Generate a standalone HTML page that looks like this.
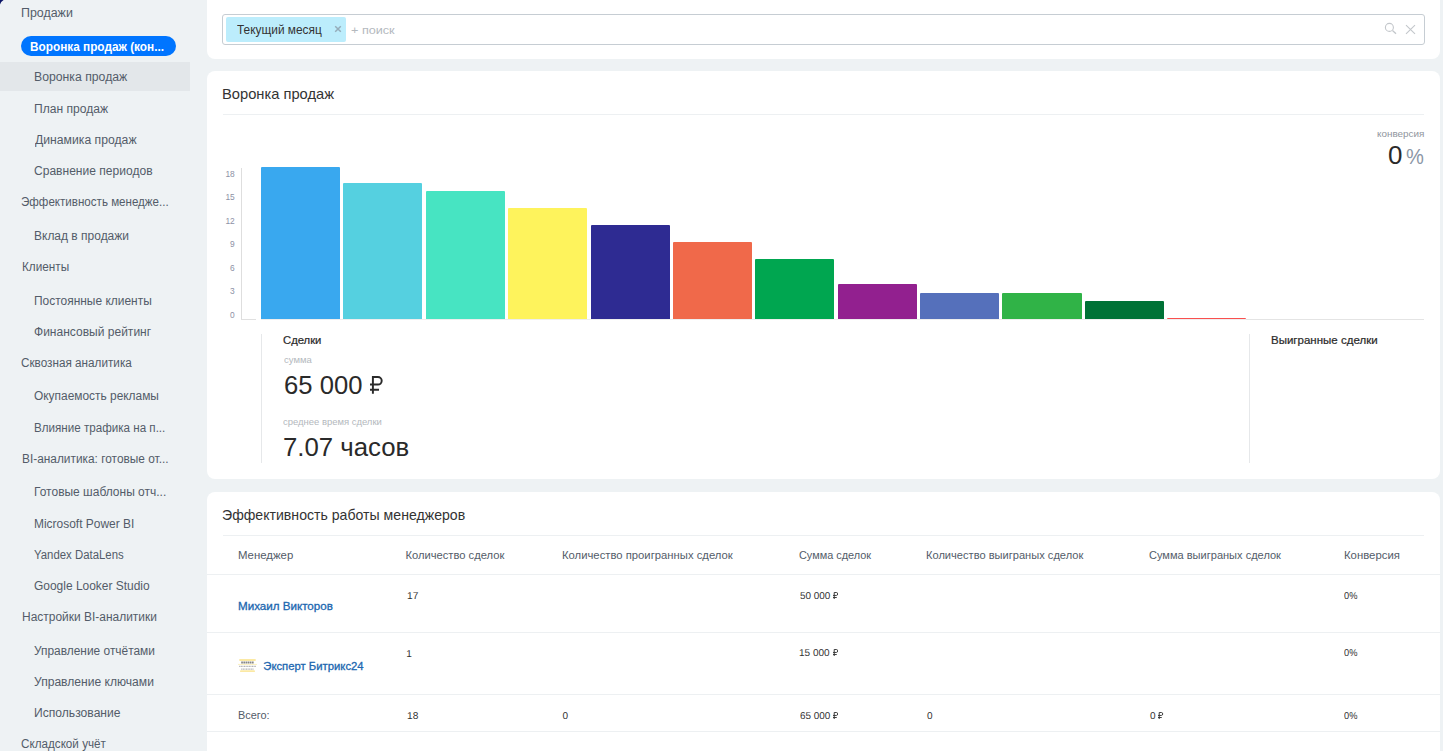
<!DOCTYPE html>
<html lang="ru">
<head>
<meta charset="utf-8">
<title>Воронка продаж</title>
<style>
*{box-sizing:border-box;margin:0;padding:0}
html,body{width:1443px;height:751px;overflow:hidden}
body{background:#eef2f4;font-family:"Liberation Sans",sans-serif;color:#535c69;position:relative}
.abs{position:absolute}
.t{position:absolute;white-space:nowrap;line-height:1;transform-origin:0 0}
.hl{position:absolute;left:0;top:62px;width:190px;height:29px;background:#e3e7ea}
.pill{position:absolute;left:21px;top:36px;width:155px;height:20px;border-radius:10px;background:#0075ff}
.panel{position:absolute;left:207px;width:1233px;background:#fff;border-radius:8px}
.ln{position:absolute;background:#edf0f2}
.bar{position:absolute;width:79.1px;border-radius:1px 1px 0 0}
.inp{position:absolute;left:222px;top:14px;width:1203px;height:31px;border:1px solid #c6cdd3;border-radius:3px;background:#fff}
.tag{position:absolute;left:226px;top:17px;width:120px;height:25px;border-radius:2px;background:#bcedfc}
</style>
</head>
<body>
<svg class="abs" style="left:0;top:0" width="4" height="5" viewBox="0 0 4 5"><path d="M0 0H3.6Q0.6 1.6 0 4.6Z" fill="#0b1566"/></svg>
<div class="hl"></div>
<div class="pill"></div>

<div class="panel" style="top:-12px;height:71px"></div>
<div class="inp"></div>
<div class="tag"></div>
<svg class="abs" style="left:334px;top:25px" width="8" height="8" viewBox="0 0 8 8"><path d="M1.2 1.2L6.8 6.8M6.8 1.2L1.2 6.8" stroke="#95adba" stroke-width="1.5" fill="none"/></svg>
<svg class="abs" style="left:1383px;top:21px" width="16" height="16" viewBox="0 0 16 16"><circle cx="6.4" cy="6.4" r="4.0" fill="none" stroke="#c3c7cb" stroke-width="1.1"/><path d="M9.5 9.5L13 12.8" stroke="#c3c7cb" stroke-width="1.3" fill="none"/></svg>
<svg class="abs" style="left:1405px;top:24px" width="11" height="11" viewBox="0 0 11 11"><path d="M1 1.1L10 9.8M10 1.1L1 9.8" stroke="#c3c7cb" stroke-width="1.1" fill="none"/></svg>

<div class="panel" style="top:71px;height:407.5px"></div>
<div class="ln" style="left:223px;top:114px;width:1201px;height:1px"></div>
<div class="ln" style="left:241px;top:168px;width:1px;height:151px;background:#dedede"></div>
<div class="ln" style="left:241px;top:319px;width:15px;height:1px;background:#e0e0e0"></div>
<div class="ln" style="left:261px;top:319px;width:985px;height:1px;background:#eeeeee"></div>
<div class="ln" style="left:1246px;top:319px;width:178px;height:1px;background:#e4e4e4"></div>
<div class="bar" style="left:261.00px;top:167px;height:152px;background:#39a8ef"></div>
<div class="bar" style="left:343.38px;top:183px;height:136px;background:#55d0e0"></div>
<div class="bar" style="left:425.76px;top:191px;height:128px;background:#47e4c2"></div>
<div class="bar" style="left:508.14px;top:208px;height:111px;background:#fef35c"></div>
<div class="bar" style="left:590.52px;top:225px;height:94px;background:#2e2b92"></div>
<div class="bar" style="left:672.90px;top:242px;height:77px;background:#f0694a"></div>
<div class="bar" style="left:755.28px;top:259px;height:60px;background:#00a650"></div>
<div class="bar" style="left:837.66px;top:284px;height:35px;background:#92208f"></div>
<div class="bar" style="left:920.04px;top:293px;height:26px;background:#5570bb"></div>
<div class="bar" style="left:1002.42px;top:293px;height:26px;background:#30b347"></div>
<div class="bar" style="left:1084.80px;top:301px;height:18px;background:#007236"></div>
<div class="bar" style="left:1167.18px;top:317.6px;height:1.4px;background:#f9504f"></div>

<div class="ln" style="left:261px;top:334px;width:1px;height:129px;background:#e6e8ea"></div>
<div class="ln" style="left:1249px;top:334px;width:1px;height:129px;background:#e6e8ea"></div>

<div class="panel" style="top:492px;height:280px"></div>
<div class="ln" style="left:223px;top:535px;width:1201px;height:1px"></div>
<div class="ln" style="left:207px;top:574px;width:1233px;height:1px"></div>
<div class="ln" style="left:207px;top:632px;width:1233px;height:1px"></div>
<div class="ln" style="left:207px;top:694px;width:1233px;height:1px"></div>
<div class="ln" style="left:207px;top:731px;width:1233px;height:1px"></div>

<svg class="abs" style="left:238px;top:658px" width="19" height="15" viewBox="0 0 19 15">
<rect x="1.1" y="1.1" width="16.8" height="1.9" rx="0.9" fill="#fbe9a4"/>
<rect x="0" y="5.9" width="19" height="1.1" fill="#fdf2c4"/>
<rect x="2" y="12.3" width="15" height="1.8" rx="0.9" fill="#fbe9a4"/>
<path d="M3.2 4.5H16" stroke="#3c3c3c" stroke-width="2.2" stroke-dasharray="1.7 0.45" opacity="0.62" fill="none"/>
<path d="M1.2 8.4H18" stroke="#666" stroke-width="1.4" stroke-dasharray="1.1 0.5" opacity="0.5" fill="none"/>
<path d="M3.2 11.1H16" stroke="#666" stroke-width="1.4" stroke-dasharray="1.1 0.5" opacity="0.5" fill="none"/>
</svg>
<svg class="abs" style="left:370.10px;top:376.20px" width="12.70" height="17.70" viewBox="0 0 71.8 100"><path d="M16.4 100V5.5H44.7A21.5 21.5 0 0 1 44.7 48.6H0M0 78H50.9" fill="none" stroke="#2a2a2a" stroke-width="11.0"/></svg><svg class="abs" style="left:832.50px;top:591.80px" width="5.32" height="7.10" viewBox="0 0 75.0 100"><path d="M17.1 100V6.7H47.4A21.0 21.0 0 0 1 47.4 48.6H0M0 78H53.2" fill="none" stroke="#333" stroke-width="13.4"/></svg><svg class="abs" style="left:832.50px;top:649.30px" width="5.32" height="7.10" viewBox="0 0 75.0 100"><path d="M17.1 100V6.7H47.4A21.0 21.0 0 0 1 47.4 48.6H0M0 78H53.2" fill="none" stroke="#333" stroke-width="13.4"/></svg><svg class="abs" style="left:832.50px;top:711.90px" width="5.32" height="7.10" viewBox="0 0 75.0 100"><path d="M17.1 100V6.7H47.4A21.0 21.0 0 0 1 47.4 48.6H0M0 78H53.2" fill="none" stroke="#333" stroke-width="13.4"/></svg><svg class="abs" style="left:1158.30px;top:711.90px" width="5.32" height="7.10" viewBox="0 0 75.0 100"><path d="M17.1 100V6.7H47.4A21.0 21.0 0 0 1 47.4 48.6H0M0 78H53.2" fill="none" stroke="#333" stroke-width="13.4"/></svg>
<span class="t" style="top:7.01px;font-size:12.5px;color:#535c69;left:21.02px;transform:scaleX(0.9929);">Продажи</span>
<span class="t" style="top:71.01px;font-size:12.5px;color:#535c69;left:34.24px;transform:scaleX(0.9791);">Воронка продаж</span>
<span class="t" style="top:103.01px;font-size:12.5px;color:#535c69;left:33.64px;transform:scaleX(0.9661);">План продаж</span>
<span class="t" style="top:134.01px;font-size:12.5px;color:#535c69;left:34.65px;transform:scaleX(0.9759);">Динамика продаж</span>
<span class="t" style="top:165.01px;font-size:12.5px;color:#535c69;left:34.47px;transform:scaleX(0.9640);">Сравнение периодов</span>
<span class="t" style="top:196.01px;font-size:12.5px;color:#535c69;left:20.77px;transform:scaleX(0.9265);">Эффективность менедже...</span>
<span class="t" style="top:230.01px;font-size:12.5px;color:#535c69;left:33.64px;transform:scaleX(0.9591);">Вклад в продажи</span>
<span class="t" style="top:261.01px;font-size:12.5px;color:#535c69;left:21.57px;transform:scaleX(0.9414);">Клиенты</span>
<span class="t" style="top:295.01px;font-size:12.5px;color:#535c69;left:33.73px;transform:scaleX(0.9560);">Постоянные клиенты</span>
<span class="t" style="top:326.01px;font-size:12.5px;color:#535c69;left:33.95px;transform:scaleX(0.9623);">Финансовый рейтинг</span>
<span class="t" style="top:357.01px;font-size:12.5px;color:#535c69;left:21.27px;transform:scaleX(0.9381);">Сквозная аналитика</span>
<span class="t" style="top:390.01px;font-size:12.5px;color:#535c69;left:33.95px;transform:scaleX(0.9529);">Окупаемость рекламы</span>
<span class="t" style="top:422.01px;font-size:12.5px;color:#535c69;left:33.88px;transform:scaleX(0.9296);">Влияние трафика на п...</span>
<span class="t" style="top:453.01px;font-size:12.5px;color:#535c69;left:21.52px;transform:scaleX(0.9497);">BI-аналитика: готовые от...</span>
<span class="t" style="top:486.01px;font-size:12.5px;color:#535c69;left:33.61px;transform:scaleX(0.9594);">Готовые шаблоны отч...</span>
<span class="t" style="top:517.51px;font-size:12.5px;color:#535c69;left:33.64px;transform:scaleX(0.9568);">Microsoft Power BI</span>
<span class="t" style="top:549.01px;font-size:12.5px;color:#535c69;left:34.19px;transform:scaleX(0.9106);">Yandex DataLens</span>
<span class="t" style="top:580.01px;font-size:12.5px;color:#535c69;left:33.77px;transform:scaleX(0.9566);">Google Looker Studio</span>
<span class="t" style="top:611.01px;font-size:12.5px;color:#535c69;left:21.52px;transform:scaleX(0.9567);">Настройки BI-аналитики</span>
<span class="t" style="top:645.01px;font-size:12.5px;color:#535c69;left:33.95px;transform:scaleX(0.9528);">Управление отчётами</span>
<span class="t" style="top:676.01px;font-size:12.5px;color:#535c69;left:33.95px;transform:scaleX(0.9667);">Управление ключами</span>
<span class="t" style="top:707.01px;font-size:12.5px;color:#535c69;left:33.61px;transform:scaleX(0.9691);">Использование</span>
<span class="t" style="top:738.01px;font-size:12.5px;color:#535c69;left:21.27px;transform:scaleX(0.9341);">Складской учёт</span>
<span class="t" style="top:40.60px;font-size:12px;color:#fff;font-weight:bold;left:29.75px;transform:scaleX(0.9836);">Воронка продаж (кон...</span>
<span class="t" style="top:24.10px;font-size:12.5px;color:#333;left:236.70px;transform:scaleX(0.9506);">Текущий месяц</span>
<span class="t" style="top:24.11px;font-size:11.7px;color:#b4b9be;left:350.67px;transform:scaleX(1.0808);">+ поиск</span>
<span class="t" style="top:87.00px;font-size:14.5px;color:#333;left:222.07px;transform:scaleX(1.0137);">Воронка продаж</span>
<span class="t" style="top:128.82px;font-size:9.6px;color:#8f959d;left:1376.93px;transform:scaleX(1.0303);">конверсия</span>
<span class="t" style="top:143.00px;font-size:25px;color:#2a2a2a;left:1388.30px;transform:scaleX(1.0378);">0</span>
<span class="t" style="top:146.01px;font-size:22.6px;color:#8b96a6;left:1406.37px;transform:scaleX(0.8895);">%</span>
<span class="t" style="top:170.01px;font-size:8.4px;color:#8d91a5;right:1208.30px;">18</span>
<span class="t" style="top:193.41px;font-size:8.4px;color:#8d91a5;right:1208.30px;">15</span>
<span class="t" style="top:216.91px;font-size:8.4px;color:#8d91a5;right:1208.30px;">12</span>
<span class="t" style="top:240.30px;font-size:8.4px;color:#8d91a5;right:1208.30px;">9</span>
<span class="t" style="top:263.80px;font-size:8.4px;color:#8d91a5;right:1208.30px;">6</span>
<span class="t" style="top:287.21px;font-size:8.4px;color:#8d91a5;right:1208.30px;">3</span>
<span class="t" style="top:310.71px;font-size:8.4px;color:#8d91a5;right:1208.30px;">0</span>
<span class="t" style="top:334.11px;font-size:11.6px;color:#2b2b2b;left:283.12px;transform:scaleX(0.9715);-webkit-text-stroke:0.22px #2b2b2b;">Сделки</span>
<span class="t" style="top:355.01px;font-size:9.6px;color:#b3b8bd;left:283.57px;transform:scaleX(0.9889);">сумма</span>
<span class="t" style="top:373.00px;font-size:25px;color:#2a2a2a;left:283.60px;transform:scaleX(1.0256);">65 000</span>
<span class="t" style="top:416.60px;font-size:9.6px;color:#b3b8bd;left:283.46px;transform:scaleX(0.9853);">среднее время сделки</span>
<span class="t" style="top:435.00px;font-size:25px;color:#2a2a2a;left:283.38px;transform:scaleX(1.0312);">7.07 часов</span>
<span class="t" style="top:334.11px;font-size:11.6px;color:#2b2b2b;left:1271.46px;transform:scaleX(0.9925);-webkit-text-stroke:0.22px #2b2b2b;">Выигранные сделки</span>
<span class="t" style="top:508.41px;font-size:14.5px;color:#333;left:222.47px;transform:scaleX(0.9728);">Эффективность работы менеджеров</span>
<span class="t" style="top:550.00px;font-size:11.2px;color:#535c69;left:237.82px;transform:scaleX(1.0174);">Менеджер</span>
<span class="t" style="top:550.00px;font-size:11.2px;color:#535c69;left:405.40px;">Количество сделок</span>
<span class="t" style="top:550.00px;font-size:11.2px;color:#535c69;left:562.09px;transform:scaleX(1.0082);">Количество проигранных сделок</span>
<span class="t" style="top:550.00px;font-size:11.2px;color:#535c69;left:798.87px;transform:scaleX(0.9738);">Сумма сделок</span>
<span class="t" style="top:550.00px;font-size:11.2px;color:#535c69;left:926.33px;transform:scaleX(0.9916);">Количество выиграных сделок</span>
<span class="t" style="top:550.00px;font-size:11.2px;color:#535c69;left:1149.15px;transform:scaleX(0.9868);">Сумма выиграных сделок</span>
<span class="t" style="top:550.00px;font-size:11.2px;color:#535c69;left:1343.97px;transform:scaleX(1.0154);">Конверсия</span>
<span class="t" style="top:601.01px;font-size:11.3px;color:#2067b0;left:238.12px;transform:scaleX(1.0265);-webkit-text-stroke:0.3px #2067b0;">Михаил Викторов</span>
<span class="t" style="top:591.91px;font-size:10.0px;color:#333;left:406.50px;transform:scaleX(1.0172);text-rendering:geometricPrecision;">17</span>
<span class="t" style="top:591.91px;font-size:10.0px;color:#333;left:799.70px;transform:scaleX(0.9921);text-rendering:geometricPrecision;">50 000</span>
<span class="t" style="top:591.91px;font-size:10.0px;color:#333;left:1343.96px;transform:scaleX(0.9276);text-rendering:geometricPrecision;">0%</span>
<span class="t" style="top:660.81px;font-size:11.3px;color:#2067b0;left:263.28px;-webkit-text-stroke:0.3px #2067b0;">Эксперт Битрикс24</span>
<span class="t" style="top:649.91px;font-size:10.0px;color:#333;left:406.20px;text-rendering:geometricPrecision;">1</span>
<span class="t" style="top:649.41px;font-size:10.0px;color:#333;left:799.02px;text-rendering:geometricPrecision;">15 000</span>
<span class="t" style="top:649.41px;font-size:10.0px;color:#333;left:1343.96px;transform:scaleX(0.9276);text-rendering:geometricPrecision;">0%</span>
<span class="t" style="top:710.00px;font-size:11.2px;color:#535c69;left:237.83px;transform:scaleX(0.9751);">Всего:</span>
<span class="t" style="top:712.02px;font-size:10.0px;color:#333;left:406.50px;transform:scaleX(1.0168);text-rendering:geometricPrecision;">18</span>
<span class="t" style="top:712.02px;font-size:10.0px;color:#333;left:562.40px;text-rendering:geometricPrecision;">0</span>
<span class="t" style="top:712.02px;font-size:10.0px;color:#333;left:799.56px;transform:scaleX(0.9926);text-rendering:geometricPrecision;">65 000</span>
<span class="t" style="top:712.02px;font-size:10.0px;color:#333;left:926.96px;text-rendering:geometricPrecision;">0</span>
<span class="t" style="top:712.02px;font-size:10.0px;color:#333;left:1149.96px;text-rendering:geometricPrecision;">0</span>
<span class="t" style="top:712.02px;font-size:10.0px;color:#333;left:1343.96px;transform:scaleX(0.9276);text-rendering:geometricPrecision;">0%</span>
</body>
</html>
